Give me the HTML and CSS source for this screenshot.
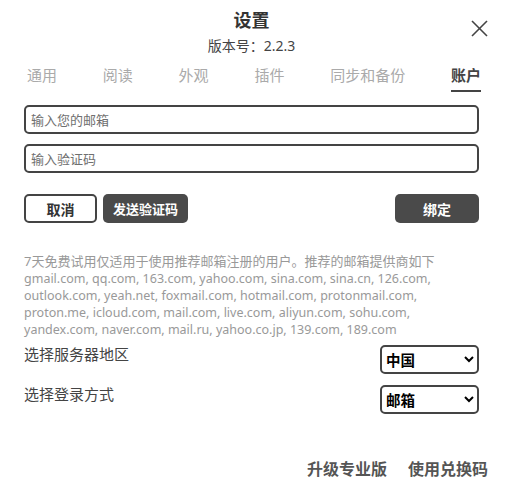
FILE: index.html
```html
<!DOCTYPE html>
<html lang="zh-CN">
<head>
    <meta charset="UTF-8">
    <meta name="viewport" content="width=device-width, initial-scale=1.0">
    <title>设置</title>
    <link rel="stylesheet" href="styles.css">
</head>
<body>
    <div class="dialog">
        <div class="header">
            <h1>设置</h1>
            <div class="version">版本号：2.2.3</div>
            <button class="close" aria-label="关闭">
                <svg width="17" height="17" viewBox="0 0 17 17" fill="none" stroke="currentColor" stroke-width="1.6">
                    <path d="M1 1L16 16"></path>
                    <path d="M16 1L1 16"></path>
                </svg>
            </button>
        </div>

        <div class="tabs">
            <span class="tab">通用</span>
            <span class="tab">阅读</span>
            <span class="tab">外观</span>
            <span class="tab">插件</span>
            <span class="tab">同步和备份</span>
            <span class="tab active">账户</span>
        </div>

        <div class="form">
            <input class="field" type="text" placeholder="输入您的邮箱">
            <input class="field" type="text" placeholder="输入验证码">
        </div>

        <div class="actions">
            <button class="btn outline">取消</button>
            <button class="btn dark send">发送验证码</button>
            <button class="btn dark bind">绑定</button>
        </div>

        <p class="note"><span class="note-head">7天免费试用仅适用于使用推荐邮箱注册的用户。推荐的邮箱提供商如下</span><br>gmail.com, qq.com, 163.com, yahoo.com, sina.com, sina.cn, 126.com, outlook.com, yeah.net, foxmail.com, hotmail.com, protonmail.com, proton.me, icloud.com, mail.com, live.com, aliyun.com, sohu.com, yandex.com, naver.com, mail.ru, yahoo.co.jp, 139.com, 189.com</p>

        <div class="option">
            <span class="label">选择服务器地区</span>
            <select class="select">
                <option>中国</option>
                <option>全球</option>
            </select>
        </div>
        <div class="option">
            <span class="label">选择登录方式</span>
            <select class="select">
                <option>邮箱</option>
                <option>手机</option>
            </select>
        </div>

        <div class="footer">
            <span class="link">升级专业版</span>
            <span class="link">使用兑换码</span>
        </div>
    </div>
</body>
</html>
```

FILE: styles.css
```css
body {
    font-family: "Noto Sans", "Noto Sans CJK SC", sans-serif;
    background-color: #fff;
    color: #333;
    margin: 0;
    padding: 0;
}

.dialog {
    width: 508px;
    height: 487px;
    box-sizing: border-box;
    padding: 0 29px 0 24px;
}

.header {
    position: relative;
    text-align: center;
    padding-top: 8px;
}

h1 {
    margin: 0;
    font-size: 18px;
    font-weight: 700;
    line-height: 24px;
    color: #333;
}

.version {
    font-size: 14px;
    line-height: 20px;
    margin-top: 4px;
    color: #444;
}

.close {
    position: absolute;
    right: -9px;
    top: 20px;
    padding: 0;
    border: none;
    background: none;
    color: #444;
    cursor: pointer;
    line-height: 0;
}

.tabs {
    display: flex;
    justify-content: space-between;
    margin: 8px -2px 0 0;
    padding: 0 0 0 3px;
}

.tab {
    font-size: 15px;
    line-height: 22px;
    color: #aaa;
    padding-bottom: 4px;
    border-bottom: 2px solid transparent;
}

.tab.active {
    color: #444;
    font-weight: 700;
    border-bottom-color: #444;
}

.form {
    display: flex;
    flex-direction: column;
    gap: 10px;
    margin-top: 13px;
}

.field {
    height: 29px;
    box-sizing: border-box;
    border: 2px solid #444;
    border-radius: 5px;
    padding: 0 5px;
    font-family: inherit;
    font-size: 13px;
    width: 455px;
    outline: none;
}

.field::placeholder {
    color: #6f6f6f;
}

.actions {
    display: flex;
    gap: 6px;
    margin-top: 21px;
    width: 455px;
}

.btn {
    height: 29px;
    box-sizing: border-box;
    border-radius: 5px;
    font-family: inherit;
    font-size: 14px;
    font-weight: 700;
    cursor: pointer;
    padding: 0 10px;
}

.btn.outline {
    width: 73px;
    background: #fff;
    color: #333;
    border: 2px solid #444;
}

.btn.dark {
    background: #4a4a4a;
    color: #fff;
    border: none;
}

.btn.send {
    width: 85px;
    font-size: 13px;
    padding: 0;
}

.btn.bind {
    width: 84px;
    margin-left: auto;
}

.note {
    margin: 30px 0 0;
    font-size: 12.5px;
    line-height: 17px;
    color: #999;
    width: 440px;
}

.note-head {
    font-size: 13px;
}

.option {
    display: flex;
    justify-content: space-between;
    align-items: flex-start;
    width: 455px;
    margin-top: 6px;
}

.option + .option {
    margin-top: 10px;
}

.label {
    font-size: 15px;
    line-height: 20px;
    color: #444;
}

.select {
    width: 99px;
    height: 29px;
    border: 2px solid #444;
    border-radius: 5px;
    font-family: inherit;
    font-size: 14.5px;
    font-weight: 700;
    color: #000;
    background: #fff;
    padding: 0;
    margin-top: 1px;
}

.footer {
    display: flex;
    justify-content: flex-end;
    gap: 21px;
    margin-top: 44px;
    margin-right: -9px;
}

.link {
    font-size: 16px;
    line-height: 22px;
    font-weight: 700;
    color: #555;
    cursor: pointer;
}
```
